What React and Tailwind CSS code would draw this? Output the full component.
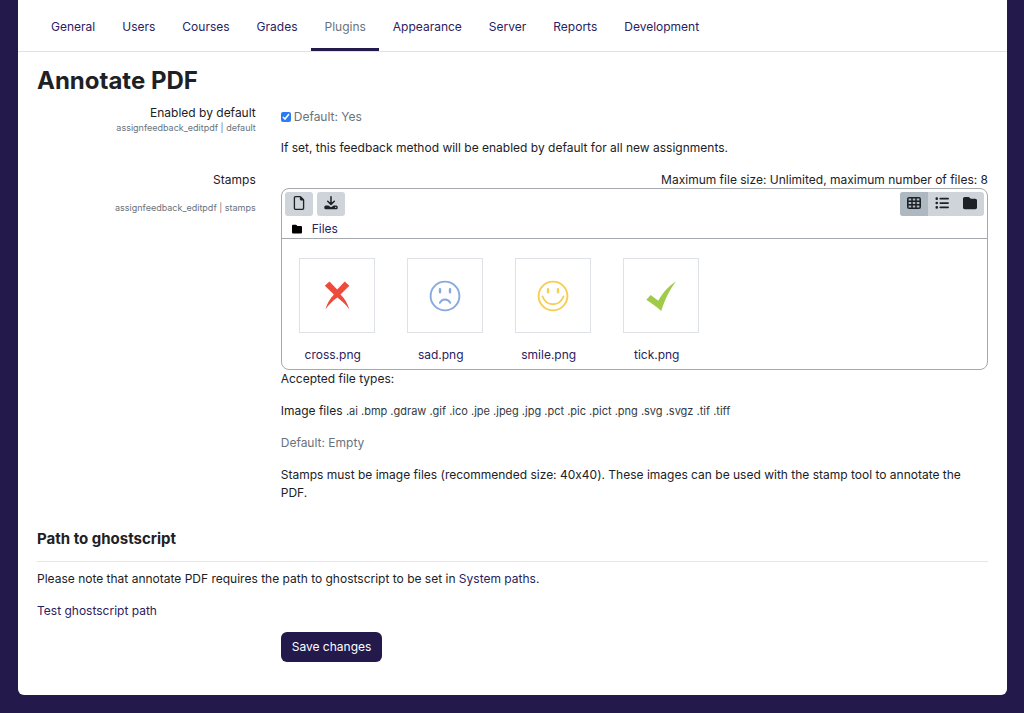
import { FaRegFile, FaListUl, FaFolder } from "react-icons/fa6";

const tabs = ["General", "Users", "Courses", "Grades", "Plugins", "Appearance", "Server", "Reports", "Development"];

function DownloadIcon() {
  return (
    <svg viewBox="0 0 14 14" className="size-[14px]" aria-hidden="true">
      <path d="M7 .8v7.400M3.700 5.200 7 8.400l3.300-3.200" fill="none" stroke="currentColor" strokeWidth="1.500" strokeLinecap="round" strokeLinejoin="round" />
      <path d="M1.800 9.600h2.500L7 11.200l2.700-1.600h2.500a1.500 1.500 0 0 1 1.500 1.500v.6a1.500 1.500 0 0 1-1.500 1.500H1.800a1.500 1.500 0 0 1-1.500-1.500v-.6a1.500 1.500 0 0 1 1.500-1.500z" fill="currentColor" />
      <circle cx="11.700" cy="11.400" r=".6" fill="#ced4da" />
    </svg>
  );
}

function GridIcon() {
  return (
    <svg viewBox="0 0 14 12" className="h-3 w-[14px]" aria-hidden="true">
      <rect x=".8" y=".8" width="12.400" height="10.400" rx="1.300" fill="none" stroke="currentColor" strokeWidth="1.600" />
      <path d="M1 4.300h12M1 7.700h12M5 1v10M9 1v10" stroke="currentColor" strokeWidth="1.500" />
    </svg>
  );
}

function CrossStamp() {
  return (
    <svg viewBox="0 0 32 32" className="size-8" aria-hidden="true">
      <path d="M3.800 5.800 8.500 1.500l7.700 8 7.500-8 4.700 4.300-8.900 8.700c4 4 7 8.500 8.900 15-3.400-4.600-7.500-8.500-12-11.900-4.700 3.400-8.600 7-12 11.900 1.800-6.300 4.600-10.800 8.500-14.900z" fill="#ee4b3c" />
    </svg>
  );
}

function FaceStamp({ happy }) {
  return (
    <svg viewBox="0 0 32 32" className="size-8" fill="none" stroke={happy ? "#f6ce55" : "#88a9de"} aria-hidden="true">
      <circle cx="16" cy="16" r="14.400" strokeWidth="1.900" />
      <path d="M11 9.300v3M21 9.300v3" strokeWidth="2.400" strokeLinecap="round" />
      {happy ? (
        <path d="M5.500 16.500c2 5 5.500 7.800 10.500 7.800s8.500-2.800 10.500-7.800" strokeWidth="1.900" strokeLinecap="round" />
      ) : (
        <path d="M10.800 22.800c1.200-2.400 3-3.300 5.200-3.300s4.100.9 5.300 3.300" strokeWidth="1.900" strokeLinecap="round" />
      )}
    </svg>
  );
}

function TickStamp() {
  return (
    <svg viewBox="0 0 32 32" className="size-8" aria-hidden="true">
      <path d="M1.300 19.700 5.700 15l7.600 5.800C17.800 12.500 23.500 6 31 1.500 24.800 9.500 20 19 16.300 31 11.800 27 6.700 23.300 1.300 19.700z" fill="#a0cb48" />
    </svg>
  );
}

const files = [
  { name: "cross.png", art: <CrossStamp /> },
  { name: "sad.png", art: <FaceStamp /> },
  { name: "smile.png", art: <FaceStamp happy /> },
  { name: "tick.png", art: <TickStamp /> },
];

function FileManager() {
  return (
    <div className="rounded-lg border border-[#a5a8ac]">
      <div className="border-b border-[#a5a8ac] px-[3px] pt-[3px]">
        <div className="flex justify-between text-[#1d2125]">
          <div className="flex gap-1">
            <button type="button" aria-label="Add file" className="flex h-6 w-7 items-center justify-center rounded-[3px] bg-[#ced4da] pb-0.5">
              <FaRegFile className="size-[14px]" />
            </button>
            <button type="button" aria-label="Download all" className="flex h-6 w-7 items-center justify-center rounded-[3px] bg-[#ced4da] pb-0.5">
              <DownloadIcon />
            </button>
          </div>
          <div className="flex overflow-hidden rounded-[3px] bg-[#ced4da]">
            <button type="button" aria-label="Icon view" aria-pressed="true" className="flex h-6 w-7 items-center justify-center bg-[#aeb8c1] pb-0.5">
              <GridIcon />
            </button>
            <button type="button" aria-label="List view" className="flex h-6 w-7 items-center justify-center pb-0.5">
              <FaListUl className="size-[14px]" />
            </button>
            <button type="button" aria-label="Tree view" className="flex h-6 w-7 items-center justify-center pb-0.5">
              <FaFolder className="size-[14px]" />
            </button>
          </div>
        </div>
        <div className="mt-1 flex items-center gap-[10px] pl-[7px]">
          <FaFolder className="size-[10px] text-black" />
          <a href="#files" className="text-[#2b2160]">Files</a>
        </div>
      </div>
      <ul className="flex flex-wrap gap-x-8 px-[17px] pt-[19px] pb-[5px]">
        {files.map((file) => (
          <li key={file.name}>
            <a href={"#" + file.name} className="block w-19 text-[#2b2160]">
              <span className="flex h-[75px] w-19 items-center justify-center border border-[#dee2e6]">{file.art}</span>
              <span className="mt-[13px] block pr-2 text-center">{file.name}</span>
            </a>
          </li>
        ))}
      </ul>
    </div>
  );
}

export default function App() {
  return (
    <div className="min-h-screen bg-[#24194b] pr-[17px] pb-[18px] pl-[18px] font-['Inter',sans-serif] text-[12px] leading-[18px] text-[#1d2125] [font-variant-ligatures:no-contextual]">
      <div className="rounded-b-md bg-white pb-[33px]">
        <nav className="flex gap-px border-b border-[#dee2e6] px-5">
          {tabs.map((tab) => (
            <a
              key={tab}
              href={"#" + tab.toLowerCase()}
              className={
                tab === "Plugins"
                  ? "border-b-[3px] border-[#24194b] px-[13px] pt-[18px] pb-3 text-[#6a737b]"
                  : "border-b-[3px] border-transparent px-[13px] pt-[18px] pb-3 text-[#2b2160]"
              }
            >
              {tab}
            </a>
          ))}
        </nav>

        <main className="px-[19px] pt-[11px]">
          <h1 className="text-2xl leading-9 font-bold">Annotate PDF</h1>

          <form onSubmit={(e) => e.preventDefault()}>
            <div className="mt-[5px] grid grid-cols-[23%_1fr] gap-x-[25px]">
              <div className="text-right">
                <label htmlFor="enabled" className="block">Enabled by default</label>
                <span className="block text-[9px] leading-3 text-[#6a737b]">assignfeedback_editpdf | default</span>
              </div>
              <div>
                <div className="mt-1 mb-[13px] flex items-center gap-[3px] text-[#6a737b]">
                  <input id="enabled" type="checkbox" defaultChecked className="size-[10px] accent-[#2b7bf3]" />
                  <span>Default: Yes</span>
                </div>
                <p>If set, this feedback method will be enabled by default for all new assignments.</p>
              </div>
            </div>

            <div className="mt-[14px] grid grid-cols-[23%_1fr] gap-x-[25px]">
              <div className="text-right">
                <h2>Stamps</h2>
                <span className="mt-[13px] block text-[9px] leading-3 text-[#6a737b]">assignfeedback_editpdf | stamps</span>
              </div>
              <div>
                <p className="text-right leading-[17px]">Maximum file size: Unlimited, maximum number of files: 8</p>
                <FileManager />
                <div className="flex flex-col gap-[14px]">
                  <p>Accepted file types:</p>
                  <p>
                    Image files{" "}
                    <small className="text-[11px] leading-none text-[#343a40]">
                      .ai .bmp .gdraw .gif .ico .jpe .jpeg .jpg .pct .pic .pict .png .svg .svgz .tif .tiff
                    </small>
                  </p>
                  <p className="text-[#6a737b]">Default: Empty</p>
                  <p>
                    Stamps must be image files (recommended size: 40x40). These images can be used with the stamp tool to annotate the PDF.
                  </p>
                </div>
              </div>
            </div>

            <h2 className="mt-[27px] border-b border-[#e4e7ea] pb-3 text-[15px] leading-5 font-bold">Path to ghostscript</h2>
            <div className="mt-2 flex flex-col gap-[14px]">
              <p>
                Please note that annotate PDF requires the path to ghostscript to be set in{" "}
                <a href="#systempaths" className="text-[#2b2160]">System paths</a>.
              </p>
              <p>
                <a href="#test" className="text-[#2b2160]">Test ghostscript path</a>
              </p>
            </div>

            <div className="mt-3 grid grid-cols-[23%_1fr] gap-x-[25px]">
              <div className="col-start-2">
                <button type="submit" className="rounded-md bg-[#24194b] px-[11px] py-[6px] text-white">Save changes</button>
              </div>
            </div>
          </form>
        </main>
      </div>
    </div>
  );
}
